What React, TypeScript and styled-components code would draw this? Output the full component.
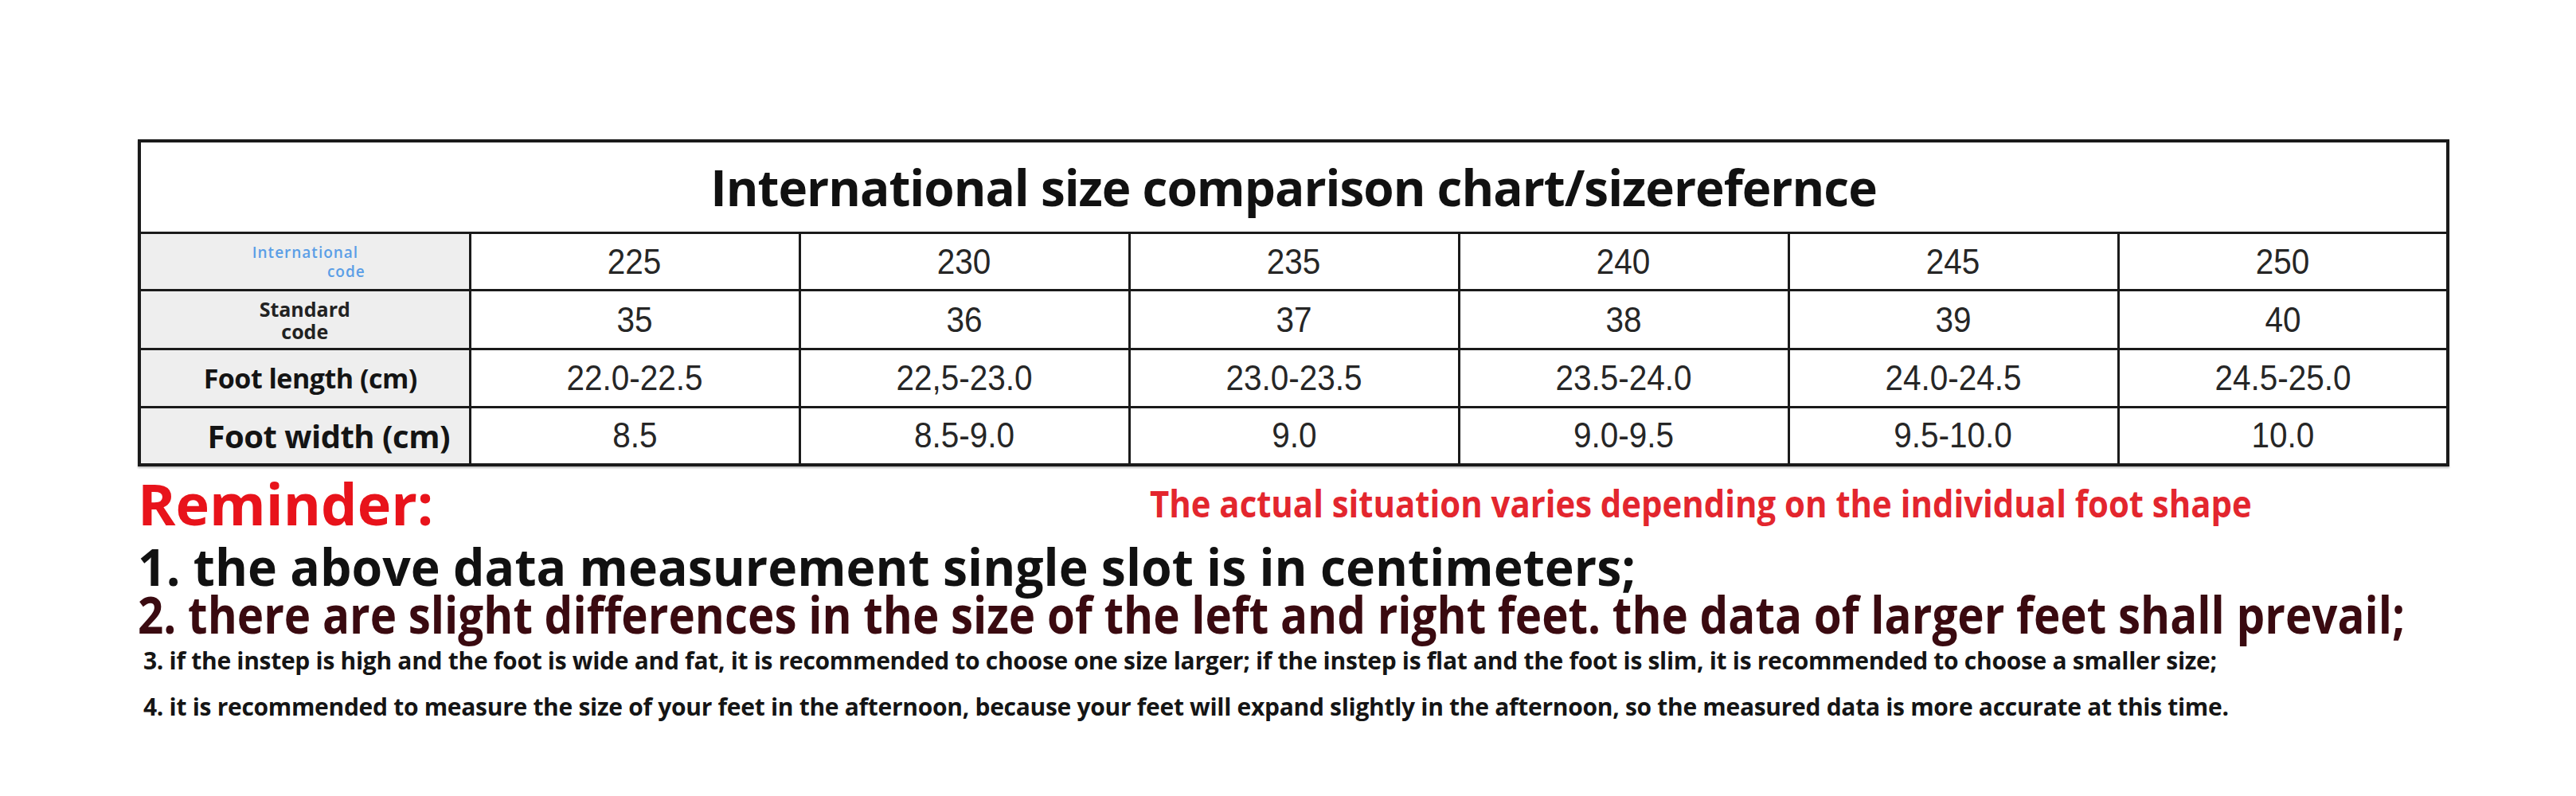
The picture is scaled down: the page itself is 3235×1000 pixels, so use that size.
import React from 'react';
import styled, { createGlobalStyle } from 'styled-components';

const GlobalStyle = createGlobalStyle`
  html, body {
    margin: 0;
    padding: 0;
    background: #ffffff;
  }
  body {
    font-family: 'Open Sans', 'Liberation Sans', sans-serif;
  }
`;

const sizes = [
  { intl: '225', std: '35', length: '22.0-22.5', width: '8.5' },
  { intl: '230', std: '36', length: '22,5-23.0', width: '8.5-9.0' },
  { intl: '235', std: '37', length: '23.0-23.5', width: '9.0' },
  { intl: '240', std: '38', length: '23.5-24.0', width: '9.0-9.5' },
  { intl: '245', std: '39', length: '24.0-24.5', width: '9.5-10.0' },
  { intl: '250', std: '40', length: '24.5-25.0', width: '10.0' },
];

export default function App(): JSX.Element {
  return (
    <>
      <GlobalStyle />
      <Page>
        <Chart>
          <colgroup>
            <col style={{ width: 415 }} />
            {sizes.map(s => (
              <col key={s.intl} style={{ width: 414 }} />
            ))}
          </colgroup>
          <tbody>
            <tr>
              <TitleCell colSpan={7}>
                International size comparison chart/sizerefernce
              </TitleCell>
            </tr>
            <Row $height={72}>
              <LabelCell>
                <IntlLabel>
                  <span>International</span>
                  <span className='code'>code</span>
                </IntlLabel>
              </LabelCell>
              {sizes.map(s => (
                <ValueCell key={s.intl}>
                  <Value>{s.intl}</Value>
                </ValueCell>
              ))}
            </Row>
            <Row $height={74}>
              <LabelCell>
                <StdLabel>
                  Standard
                  <br />
                  code
                </StdLabel>
              </LabelCell>
              {sizes.map(s => (
                <ValueCell key={s.intl}>
                  <Value>{s.std}</Value>
                </ValueCell>
              ))}
            </Row>
            <Row $height={73}>
              <LabelCell>
                <BoldLabel $size={34} $shift={14}>
                  Foot length (cm)
                </BoldLabel>
              </LabelCell>
              {sizes.map(s => (
                <ValueCell key={s.intl}>
                  <Value>{s.length}</Value>
                </ValueCell>
              ))}
            </Row>
            <Row $height={72}>
              <LabelCell>
                <BoldLabel $size={40} $shift={60}>
                  Foot width (cm)
                </BoldLabel>
              </LabelCell>
              {sizes.map(s => (
                <ValueCell key={s.intl}>
                  <Value>{s.width}</Value>
                </ValueCell>
              ))}
            </Row>
          </tbody>
        </Chart>

        <ReminderBar>
          <ReminderTitle>Reminder:</ReminderTitle>
          <ReminderNote>
            The actual situation varies depending on the individual foot shape
          </ReminderNote>
        </ReminderBar>

        <BigNote $color='#111111' $top={10} $scale={0.977}>
          1. the above data measurement single slot is in centimeters;
        </BigNote>
        <BigNote $color='#3a0a10' $top={-4} $scale={0.883}>
          2. there are slight differences in the size of the left and right
          feet. the data of larger feet shall prevail;
        </BigNote>
        <SmallNote $top={8}>
          3. if the instep is high and the foot is wide and fat, it is
          recommended to choose one size larger; if the instep is flat and the
          foot is slim, it is recommended to choose a smaller size;
        </SmallNote>
        <SmallNote $top={22}>
          4. it is recommended to measure the size of your feet in the
          afternoon, because your feet will expand slightly in the afternoon, so
          the measured data is more accurate at this time.
        </SmallNote>
      </Page>
    </>
  );
}

const Page = styled.div`
  width: 3235px;
  height: 1000px;
  box-sizing: border-box;
  padding: 175px 0 0 173px;
  background: #ffffff;
  overflow: hidden;
`;

const Chart = styled.table`
  width: 2901px;
  table-layout: fixed;
  border-collapse: collapse;
  border: 4px solid #1a1a1a;
  box-shadow: 0 2px 2px rgba(0, 0, 0, 0.25);
`;

const Row = styled.tr<{ $height: number }>`
  height: ${p => p.$height}px;
`;

const TitleCell = styled.td`
  height: 112px;
  padding: 0;
  text-align: center;
  vertical-align: middle;
  font-family: 'Open Sans', sans-serif;
  font-weight: 700;
  font-size: 62px;
  letter-spacing: -1px;
  color: #111111;
  border-bottom: 3px solid #1a1a1a;
`;

const LabelCell = styled.td`
  padding: 0;
  background: #eeeeee;
  border: 3px solid #1a1a1a;
  text-align: center;
  vertical-align: middle;
`;

const ValueCell = styled.td`
  padding: 0;
  border: 3px solid #1a1a1a;
  text-align: center;
  vertical-align: middle;
`;

const Value = styled.span`
  display: inline-block;
  font-family: 'Liberation Sans', Arial, sans-serif;
  font-size: 45px;
  color: #262626;
  transform: scaleX(0.9);
`;

const IntlLabel = styled.div`
  display: inline-flex;
  flex-direction: column;
  align-items: flex-start;
  width: 142px;
  margin-left: 10px;
  font-family: 'Open Sans', sans-serif;
  font-weight: 600;
  font-size: 19px;
  line-height: 24px;
  letter-spacing: 1px;
  color: #5b9ee6;
  text-align: left;

  .code {
    align-self: flex-end;
  }
`;

const StdLabel = styled.div`
  font-family: 'Open Sans', sans-serif;
  font-weight: 700;
  font-size: 25px;
  line-height: 28px;
  color: #222222;
`;

const BoldLabel = styled.div<{ $size: number; $shift: number }>`
  padding-left: ${p => p.$shift}px;
  font-family: 'Open Sans', sans-serif;
  font-weight: 700;
  font-size: ${p => p.$size}px;
  color: #141414;
  letter-spacing: -0.5px;
  white-space: nowrap;
`;

const ReminderBar = styled.div`
  display: flex;
  align-items: center;
  margin-top: 8px;
  height: 76px;
`;

const ReminderTitle = styled.div`
  width: 1271px;
  font-family: 'Open Sans', sans-serif;
  font-weight: 700;
  font-size: 72px;
  color: #e8131b;
`;

const ReminderNote = styled.div`
  font-family: 'Open Sans', sans-serif;
  font-weight: 700;
  font-size: 46px;
  color: #e3262e;
  white-space: nowrap;
  transform: scaleX(0.91);
  transform-origin: left center;
`;

const BigNote = styled.div<{ $color: string; $top: number; $scale: number }>`
  margin-top: ${p => p.$top}px;
  font-family: 'Open Sans', sans-serif;
  font-weight: 700;
  font-size: 64px;
  line-height: 64px;
  color: ${p => p.$color};
  white-space: nowrap;
  transform: scaleX(${p => p.$scale});
  transform-origin: left center;
`;

const SmallNote = styled.div<{ $top: number }>`
  margin-top: ${p => p.$top}px;
  padding-left: 7px;
  font-family: 'Open Sans', sans-serif;
  font-weight: 700;
  font-size: 30px;
  line-height: 36px;
  color: #151515;
  white-space: nowrap;
  letter-spacing: -0.3px;
`;
